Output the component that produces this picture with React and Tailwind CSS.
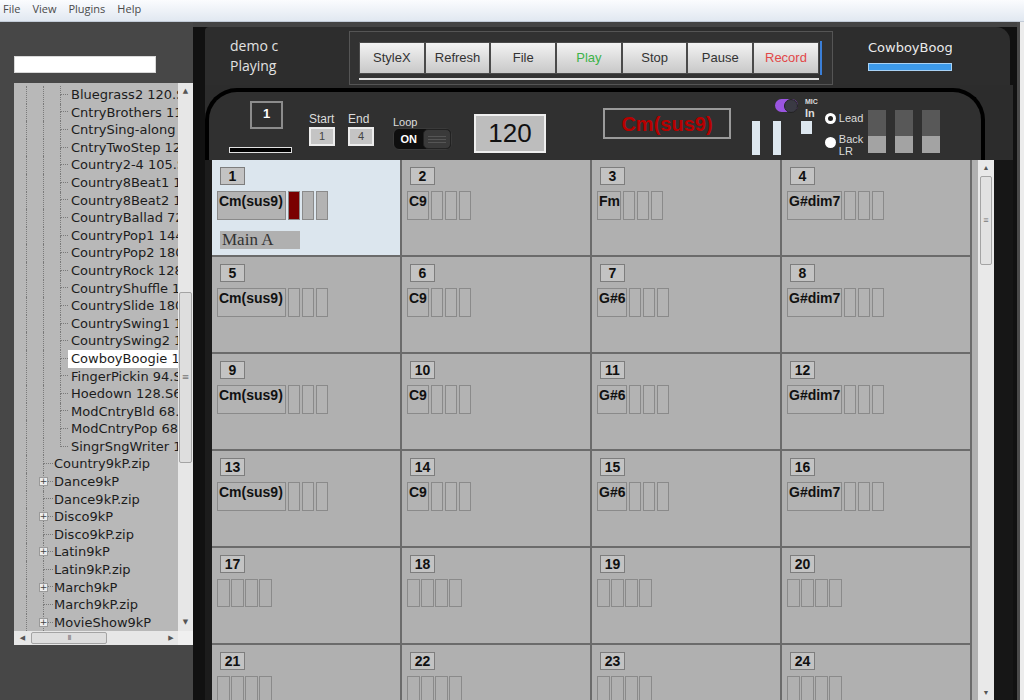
import React from 'react';

const childItems = [
  'Bluegrass2 120.STY', 'CntryBrothers 112.STY', 'CntrySing-along 100.STY', 'CntryTwoStep 128.STY',
  'Country2-4 105.STY', 'Country8Beat1 120.STY', 'Country8Beat2 112.STY', 'CountryBallad 72.STY',
  'CountryPop1 144.STY', 'CountryPop2 180.STY', 'CountryRock 128.STY', 'CountryShuffle 120.STY',
  'CountrySlide 180.STY', 'CountrySwing1 120.STY', 'CountrySwing2 112.STY', 'CowboyBoogie 120.STY',
  'FingerPickin 94.STY', 'Hoedown 128.S6', 'ModCntryBld 68.STY', 'ModCntryPop 68.STY', 'SingrSngWriter 100.STY',
];

const parentItems = [
  ['Country9kP.zip', false], ['Dance9kP', true], ['Dance9kP.zip', false], ['Disco9kP', true],
  ['Disco9kP.zip', false], ['Latin9kP', true], ['Latin9kP.zip', false], ['March9kP', true],
  ['March9kP.zip', false], ['MovieShow9kP', true],
];

function Guide() {
  return <div className="w-[17px] shrink-0 border-l border-dotted border-[#7a7a7a]" />;
}

function ChildRow({ label, selected, last }) {
  return (
    <div className="flex h-[17.6px] shrink-0">
      <div className="w-[12px] shrink-0" />
      <Guide />
      <Guide />
      <div className="w-[8px] shrink-0 flex flex-col">
        <div className="h-1/2 border-l border-b border-dotted border-[#7a7a7a]" />
        <div className={`h-1/2 ${last ? '' : 'border-l border-dotted border-[#7a7a7a]'}`} />
      </div>
      <span className={`flex-1 pl-[3px] leading-[17.6px] text-[13px] text-[#1c1c1c] ${selected ? 'bg-white' : ''}`}>{label}</span>
    </div>
  );
}

function ParentRow({ label, expander }) {
  return (
    <div className="flex h-[17.6px] shrink-0">
      <div className="w-[12px] shrink-0" />
      <Guide />
      <div className="relative w-[10px] shrink-0 flex flex-col">
        <div className="h-1/2 border-l border-b border-dotted border-[#7a7a7a]" />
        <div className="h-1/2 border-l border-dotted border-[#7a7a7a]" />
        {expander && (
          <div className="absolute left-[-4px] top-[4px] w-[9px] h-[9px] border border-[#9a9a9a] bg-[#ececec] flex items-center justify-center text-[9px] leading-[9px] text-[#444]">
            +
          </div>
        )}
      </div>
      <span className="pl-[1px] leading-[17.6px] text-[13px] text-[#1c1c1c]">{label}</span>
    </div>
  );
}

function LeftPanel() {
  return (
    <div className="w-[193px] shrink-0 bg-[#474747] flex flex-col">
      <div className="h-[34px]" />
      <div className="ml-[14px] w-[142px] h-[17px] bg-white border border-[#d8d8d8]" />
      <div className="ml-[14px] mt-[10px] w-[179px] h-[562px] bg-[#b8b8b8] flex flex-col" style={{ fontFamily: '"DejaVu Sans", sans-serif' }}>
        <div className="flex h-[548px]">
          <div className="w-[164px] overflow-hidden whitespace-nowrap flex flex-col pt-[3px]">
            {childItems.map((c, i) => (
              <ChildRow key={c} label={c} selected={i === 15} last={i === childItems.length - 1} />
            ))}
            {parentItems.map(([l, e]) => (
              <ParentRow key={l} label={l} expander={e} />
            ))}
          </div>
          <div className="w-[15px] bg-[#e7e7e7] flex flex-col items-center">
            <div className="h-[17px] flex items-center justify-center text-[7px] text-[#555]">▲</div>
            <div className="mt-[192px] w-[13px] h-[171px] bg-[#dedede] border border-[#a4a4a4] rounded-[2px] flex items-center justify-center text-[9px] text-[#777]">≡</div>
            <div className="flex-1" />
            <div className="h-[17px] flex items-center justify-center text-[7px] text-[#555]">▼</div>
          </div>
        </div>
        <div className="flex h-[14px]">
          <div className="w-[164px] bg-[#e7e7e7] flex items-center">
            <div className="w-[17px] text-center text-[7px] text-[#555]">◀</div>
            <div className="w-[76px] h-[12px] bg-[#dedede] border border-[#a4a4a4] rounded-[2px] flex items-center justify-center text-[7px] text-[#777] tracking-[-1px]">III</div>
            <div className="flex-1" />
            <div className="w-[14px] text-center text-[7px] text-[#555]">▶</div>
          </div>
          <div className="w-[15px] bg-[#f0f0f0]" />
        </div>
      </div>
    </div>
  );
}

const buttons = [
  ['StyleX', 'text-[#333]'], ['Refresh', 'text-[#333]'], ['File', 'text-[#333]'], ['Play', 'text-[#3db34a]'],
  ['Stop', 'text-[#333]'], ['Pause', 'text-[#333]'], ['Record', 'text-[#e24848]'],
];

function Header() {
  return (
    <div className="ml-[12px] w-[805px] h-[58px] shrink-0 bg-[#2d2d2d] rounded-tl-[4px] rounded-tr-[14px] flex">
      <div className="pl-[25px] w-[144px] pt-[9px] text-[14px] leading-[20px] text-[#e2e2e2]" style={{ fontFamily: '"Open Sans", sans-serif' }}>
        <div>demo c</div>
        <div>Playing</div>
      </div>
      <div className="mt-[4px] w-[484px] h-[54px] border border-[#555] bg-[#323232] pl-[9px] pt-[10px]">
        <div className="flex">
          {buttons.map(([b, c]) => (
            <div key={b} className={`w-[65.7px] h-[32px] border border-[#4a4a4a] bg-linear-to-b from-[#f3f3f3] to-[#c8c8c8] flex items-center justify-center text-[13px] ${c}`}>
              {b}
            </div>
          ))}
          <div className="ml-[1px] w-[2px] h-[34px] -mt-[1px] bg-[#3b7fd8]" />
        </div>
        <div className="mt-[3px] w-[460px] h-[2px] bg-[#e0e0e0]" />
      </div>
      <div className="ml-[35px] mt-[12px] flex flex-col">
        <div className="w-[84px] overflow-hidden whitespace-nowrap text-[13px] leading-[18px] text-[#eaeaea]" style={{ fontFamily: '"DejaVu Sans", sans-serif' }}>CowboyBoogie</div>
        <div className="mt-[6px] w-[84px] h-[8px] bg-[#3d9aea] border border-[#a9d2f5]" />
      </div>
    </div>
  );
}

function ControlPanel() {
  return (
    <div className="mt-[3px] w-[780px] h-[72px] shrink-0 rounded-t-[32px] border-t-4 border-l-4 border-r-4 border-black bg-[#303030] flex items-start text-[#dcdcdc]">
      {/* measure box */}
      <div className="ml-[20px] mt-[9px] w-[63px] flex flex-col">
        <div className="ml-[21px] w-[33px] h-[28px] border-2 border-[#8c8c8c] flex justify-center pt-[3px] text-[13px] font-bold leading-[16px] text-white">1</div>
        <div className="mt-[18px] w-[63px] h-[6px] border border-[#e0e0e0] bg-black" />
      </div>
      {/* start */}
      <div className="ml-[17px] mt-[21px] flex flex-col">
        <div className="text-[12px] leading-[13px]">Start</div>
        <div className="mt-[1px] w-[26px] h-[19px] bg-[#c4c4c4] border-2 border-[#ececec] flex items-center justify-center text-[11px] text-[#444]">1</div>
      </div>
      <div className="ml-[13px] mt-[21px] flex flex-col">
        <div className="text-[12px] leading-[13px]">End</div>
        <div className="mt-[1px] w-[26px] h-[19px] bg-[#c4c4c4] border-2 border-[#ececec] flex items-center justify-center text-[11px] text-[#444]">4</div>
      </div>
      {/* loop */}
      <div className="ml-[19px] mt-[24px] flex flex-col">
        <div className="text-[11px] leading-[12px]">Loop</div>
        <div className="w-[59px] h-[22px] rounded-[6px] bg-[#0e0e0e] border border-[#3a3a3a] flex items-center">
          <div className="w-[30px] text-center text-[11px] font-bold text-white">ON</div>
          <div className="w-[28px] h-[20px] rounded-[5px] bg-[#3a3a3a] border border-[#222] flex flex-col items-center justify-center gap-[2px]">
            <div className="w-[18px] h-px bg-[#555]" />
            <div className="w-[18px] h-px bg-[#555]" />
            <div className="w-[18px] h-px bg-[#555]" />
          </div>
        </div>
      </div>
      {/* tempo */}
      <div className="ml-[22px] mt-[22px] w-[72px] h-[39px] bg-[#bdbdbd] border-2 border-[#efefef] flex items-center justify-center text-[26px] text-[#111]">120</div>
      {/* chord */}
      <div className="ml-[57px] mt-[16px] w-[128px] h-[31px] border-2 border-[#9a9a9a] flex items-center justify-center text-[20px] font-bold text-[#b80000]">Cm(sus9)</div>
      {/* bar 1 */}
      <div className="ml-[21px] mt-[29px] w-[8px] h-[34px] bg-[#dde7ef]" />
      {/* mic group */}
      <div className="ml-[13px] mt-[6px] flex flex-col">
        <div className="flex h-[23px] items-start">
          <div className="ml-[2px] mt-[1px] w-[23px] h-[13px] rounded-full bg-[#9a55e0] flex justify-end items-center">
            <div className="w-[14px] h-[14px] rounded-full bg-[#3a3a44] border border-[#222]" />
          </div>
          <div className="ml-[7px] flex flex-col">
            <div className="text-[7px] leading-[8px] font-bold">MIC</div>
            <div className="text-[11px] leading-[12px] font-bold mt-[1px]">In</div>
          </div>
        </div>
        <div className="flex items-start">
          <div className="w-[8px] h-[34px] bg-[#dde7ef]" />
          <div className="ml-[20px] w-[11px] h-[13px] bg-[#dde7ef]" />
        </div>
      </div>
      {/* radios */}
      <div className="ml-[7px] mt-[20px] w-[43px] flex flex-col text-[11px] leading-[12px]">
        <div className="flex items-center">
          <div className="w-[11px] h-[11px] rounded-full bg-white flex items-center justify-center">
            <div className="w-[5px] h-[5px] rounded-full bg-[#222]" />
          </div>
          <span className="ml-[3px]">Lead</span>
        </div>
        <div className="mt-[9px] flex items-start">
          <div className="mt-[4px] w-[11px] h-[11px] rounded-full bg-white" />
          <div className="ml-[3px] flex flex-col">
            <span>Back</span>
            <span>LR</span>
          </div>
        </div>
      </div>
      {/* meters */}
      <div className="mt-[18px] flex gap-[9px]">
        {[0, 1, 2].map((i) => (
          <div key={i} className="w-[18px] h-[43px] flex flex-col">
            <div className="h-[26px] bg-[#585858]" />
            <div className="flex-1 bg-[#a3a3a3]" />
          </div>
        ))}
      </div>
    </div>
  );
}

const chordWidths = { 'Cm(sus9)': 69, C9: 22, Fm: 24, 'G#dim7': 55, 'G#6': 30 };
const cells = [
  'Cm(sus9)', 'C9', 'Fm', 'G#dim7',
  'Cm(sus9)', 'C9', 'G#6', 'G#dim7',
  'Cm(sus9)', 'C9', 'G#6', 'G#dim7',
  'Cm(sus9)', 'C9', 'G#6', 'G#dim7',
  null, null, null, null,
  null, null, null, null,
];

function Cell({ n, chord }) {
  const sel = n === 1;
  return (
    <div className={`h-[97px] border-r-2 border-b-2 border-[#6b6b6b] pl-[5px] pt-[7px] ${sel ? 'bg-[#dce6ee]' : 'bg-[#b0b0b0]'}`}>
      <div className="ml-[3px] w-[25px] h-[18px] border border-[#7d7d7d] bg-[#c3c3c3] text-center text-[14px] font-bold leading-[16px] text-[#111]">{n}</div>
      {chord ? (
        <div className="mt-[6px] flex gap-[2px]">
          <div className="h-[29px] border border-[#8a8a8a] bg-[#b3b3b3] pl-[1px] pt-[1px] text-[14px] font-bold leading-[16px] text-[#111] whitespace-nowrap" style={{ width: chordWidths[chord] }}>
            {chord}
          </div>
          {[0, 1, 2].map((i) => (
            <div key={i} className={`w-[12px] h-[29px] border border-[#8a8a8a] ${sel && i === 0 ? 'bg-[#7a0000]' : 'bg-[#b3b3b3]'}`} />
          ))}
        </div>
      ) : (
        <div className="mt-[6px] flex gap-[1px]">
          {[0, 1, 2, 3].map((i) => (
            <div key={i} className="w-[13px] h-[28px] border border-[#8a8a8a]" />
          ))}
        </div>
      )}
      {sel && (
        <div className="ml-[3px] mt-[11px] w-[80px] h-[18px] bg-[#b0b0b0] pl-[2px] text-[17px] leading-[18px] text-[#333]" style={{ fontFamily: '"Liberation Serif", serif' }}>
          Main A
        </div>
      )}
    </div>
  );
}

function GridArea() {
  return (
    <div className="flex flex-1 min-h-0">
      <div className="w-[7px] bg-[#1c1c1c]" />
      <div className="w-[760px] grid grid-cols-4 content-start overflow-hidden bg-[#b0b0b0]">
        {cells.map((c, i) => (
          <Cell key={i} n={i + 1} chord={c} />
        ))}
      </div>
      <div className="w-[6px] bg-[#b0b0b0]" />
      <div className="w-[16px] bg-[#e9e9e9] flex flex-col items-center">
        <div className="h-[16px] flex items-center justify-center text-[7px] text-[#555]">▲</div>
        <div className="w-[12px] h-[89px] bg-[#e2e2e2] border border-[#a4a4a4] rounded-[2px] flex items-center justify-center text-[9px] text-[#777]">≡</div>
        <div className="flex-1" />
        <div className="h-[14px] flex items-center justify-center text-[7px] text-[#555]">▼</div>
      </div>
      <div className="w-[19px] bg-[#161616]" />
    </div>
  );
}

export default function App() {
  return (
    <div className="w-[1024px] h-[700px] overflow-hidden flex flex-col bg-[#111]" style={{ fontFamily: '"Liberation Sans", Arial, sans-serif' }}>
      <div className="h-[22px] shrink-0 bg-linear-to-b from-[#fbfcfe] to-[#e1e8f1] border-b border-[#c3ccd8] flex items-center gap-[12px] pl-[3px] pb-[2px] text-[11px] text-[#4a4a4a]" style={{ fontFamily: '"Open Sans", sans-serif' }}>
        <span>File</span>
        <span>View</span>
        <span>Plugins</span>
        <span>Help</span>
      </div>
      <div className="flex flex-1 min-h-0">
        <LeftPanel />
        <div className="w-[824px] shrink-0 flex flex-col bg-[#111]">
          <div className="h-[5px] shrink-0 bg-[#444]" />
          <Header />
          <div className="ml-[12px] w-[808px] flex-1 min-h-0 flex flex-col bg-[#2c2c2c]">
            <ControlPanel />
            <GridArea />
          </div>
        </div>
        <div className="w-[7px] shrink-0 flex">
          <div className="w-[3px] bg-[#4a4a4a]" />
          <div className="flex-1 bg-[#ececec]" />
        </div>
      </div>
    </div>
  );
}
